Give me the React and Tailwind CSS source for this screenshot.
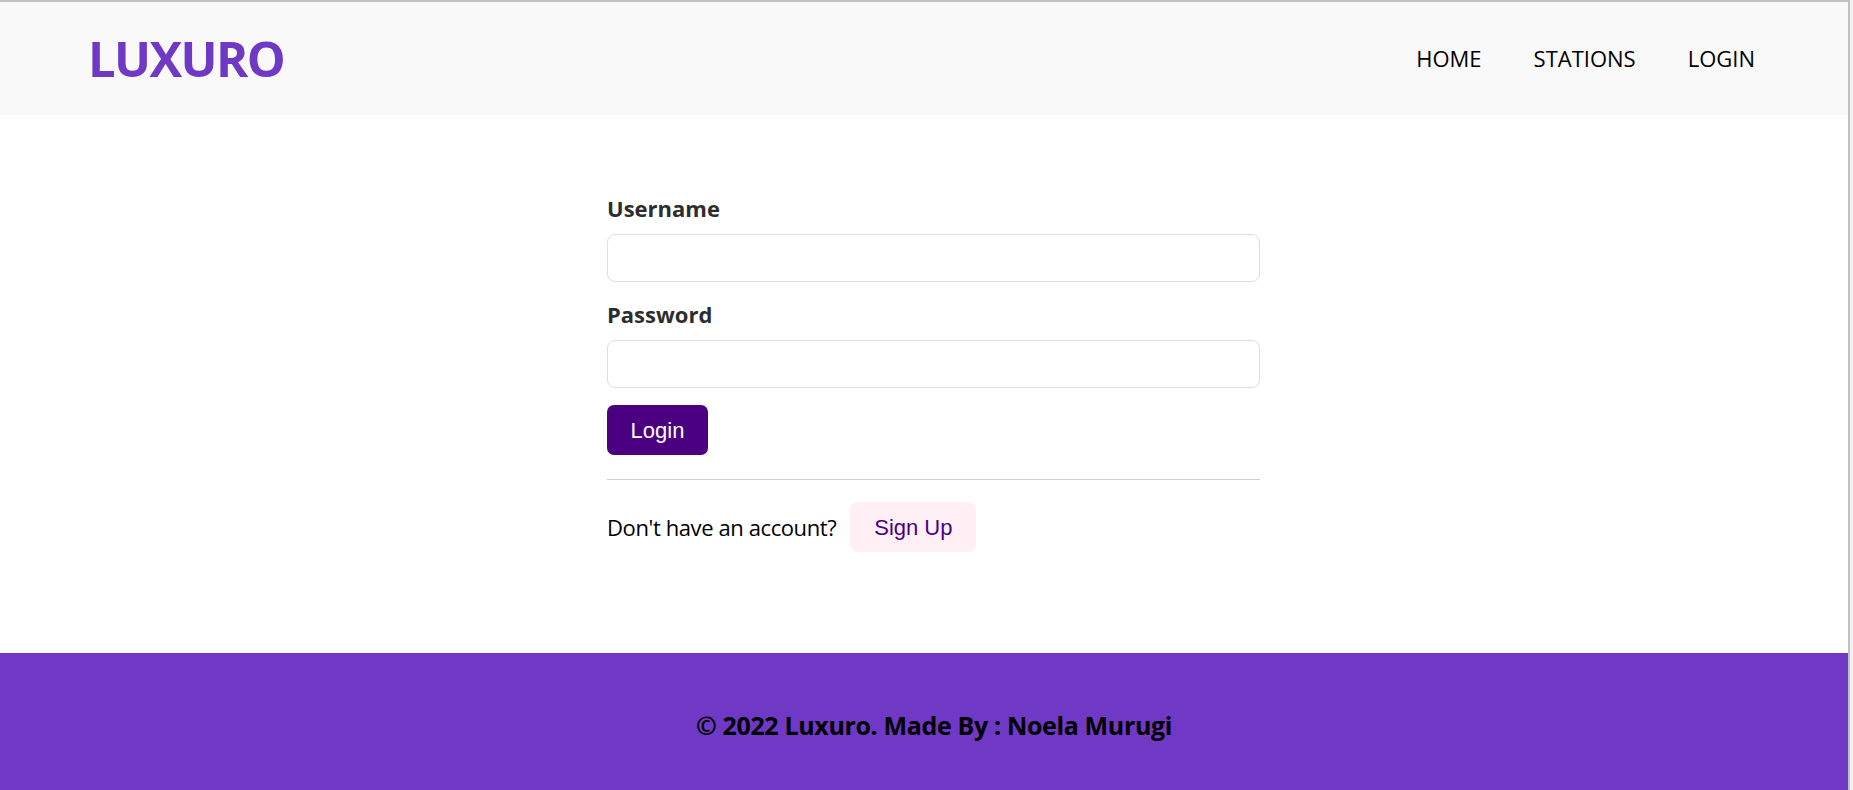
export default function App() {
  return (
    <div className="min-h-screen bg-[#f1f1f1] font-['Open_Sans',sans-serif]">
      <div className="w-[1850px] h-[790px] flex flex-col bg-white border-t-2 border-r-2 border-[#c2c2c2]">
        {/* Navbar */}
        <header className="h-[113px] shrink-0 bg-[#f9f9f9] flex items-center justify-between pl-[88px] pr-[93px]">
          <a href="#" className="text-[49px] font-bold leading-none text-[#6f38c5] tracking-[-1.6px]">
            LUXURO
          </a>
          <nav className="flex items-center gap-[52px] text-[22px] text-black">
            <a href="#">HOME</a>
            <a href="#">STATIONS</a>
            <a href="#">LOGIN</a>
          </nav>
        </header>

        {/* Login form */}
        <main className="flex-1 pt-[78px]">
          <form className="ml-[607px] w-[653px]" onSubmit={(e) => e.preventDefault()}>
            <label className="block text-[22px] leading-[30px] font-bold text-[#2d2d2d]">
              Username
            </label>
            <input
              type="text"
              className="mt-[11px] block w-full h-[48px] rounded-[8px] border border-[#dedede] px-3 outline-none"
            />
            <label className="block mt-[17px] text-[22px] leading-[30px] font-bold text-[#2d2d2d]">
              Password
            </label>
            <input
              type="password"
              className="mt-[11px] block w-full h-[48px] rounded-[8px] border border-[#dedede] px-3 outline-none"
            />
            <button
              type="submit"
              className="mt-[17px] h-[50px] w-[101px] rounded-[7px] bg-[#4b0082] text-white text-[22px] font-['Liberation_Sans',Arial,sans-serif]"
            >
              Login
            </button>
            <hr className="mt-[24px] border-0 border-t border-[#cfcfcf]" />
            <div className="mt-[22px] flex items-center gap-[14px]">
              <span className="text-[22px] tracking-[-0.4px] text-black">Don't have an account?</span>
              <button
                type="button"
                className="h-[50px] w-[126px] rounded-[8px] bg-[#fff0f5] text-[#4b0082] text-[22px] font-['Liberation_Sans',Arial,sans-serif]"
              >
                Sign Up
              </button>
            </div>
          </form>
        </main>

        {/* Footer */}
        <footer className="h-[137px] shrink-0 bg-[#6f38c5] flex items-center justify-center pl-[20px] pt-[8px]">
          <h5 className="text-[25px] font-bold tracking-[-0.35px] text-black">
            © 2022 Luxuro. Made By : Noela Murugi
          </h5>
        </footer>
      </div>
    </div>
  );
}
